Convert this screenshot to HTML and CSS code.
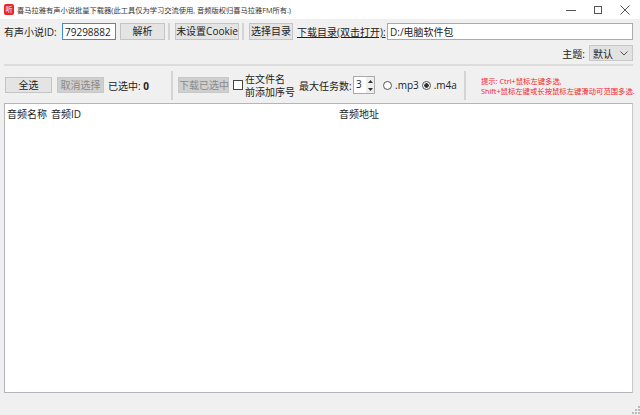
FILE: index.html
```html
<!DOCTYPE html>
<html lang="zh-CN">
<head>
  <meta charset="UTF-8">
  <meta name="viewport" content="width=device-width, initial-scale=1.0">
  <title>喜马拉雅有声小说批量下载器</title>
  <link rel="stylesheet" href="styles.css">
</head>
<body>
  <div class="window">
    <div class="titlebar">
      <span class="app-icon">听</span>
      <span class="title-text">喜马拉雅有声小说批量下载器(此工具仅为学习交流使用, 音频版权归喜马拉雅FM所有.)</span>
      <div class="window-btns">
        <svg width="10" height="10" viewBox="0 0 10 10"><path d="M0 5.5h10" stroke="#555" fill="none"/></svg>
        <svg width="10" height="10" viewBox="0 0 10 10"><rect x="1.5" y="1.5" width="7" height="7" stroke="#555" fill="none"/></svg>
        <svg width="10" height="10" viewBox="0 0 10 10"><path d="M0.5 0.5l9 9M9.5 0.5l-9 9" stroke="#555" fill="none"/></svg>
      </div>
    </div>

    <div class="row row-top">
      <label class="lbl lbl-id">有声小说ID:</label>
      <input class="id-input" type="text" value="79298882">
      <button class="btn btn-parse">解析</button>
      <span class="vline"></span>
      <button class="btn btn-cookie">未设置Cookie</button>
      <span class="vline"></span>
      <button class="btn btn-dir">选择目录</button>
      <a class="dir-link" href="#">下载目录(双击打开):</a>
      <input class="dir-input" type="text" value="D:/电脑软件包">
    </div>

    <div class="row row-theme">
      <label class="lbl">主题:</label>
      <div class="combo">
        <span>默认</span>
        <svg width="8" height="5" viewBox="0 0 8 5"><path d="M0.5 0.5l3.5 3.5 3.5-3.5" stroke="#555" fill="none"/></svg>
      </div>
    </div>

    <div class="hline"></div>

    <div class="row row-actions">
      <button class="btn btn-all">全选</button>
      <button class="btn btn-off btn-cancel">取消选择</button>
      <span class="lbl selected">已选中: <b>0</b></span>
      <span class="vline vline-tall"></span>
      <button class="btn btn-off btn-down">下载已选中</button>
      <span class="check"></span>
      <span class="lbl check-text">在文件名<br>前添加序号</span>
      <span class="lbl max-label">最大任务数:</span>
      <div class="spin">
        <span class="spin-val">3</span>
        <span class="spin-arrows">
          <svg width="5" height="3" viewBox="0 0 5 3"><path d="M2.5 0L5 3H0z" fill="#333"/></svg>
          <svg width="5" height="3" viewBox="0 0 5 3"><path d="M0 0h5L2.5 3z" fill="#333"/></svg>
        </span>
      </div>
      <span class="radio"></span>
      <span class="lbl">.mp3</span>
      <span class="radio radio-on"></span>
      <span class="lbl">.m4a</span>
      <span class="vline vline-tall vline-hint"></span>
      <p class="hint">提示: Ctrl+鼠标左键多选,<br>Shift+鼠标左键或长按鼠标左键滑动可范围多选.</p>
    </div>

    <div class="table">
      <div class="table-head">
        <span class="col-name">音频名称</span>
        <span class="col-id">音频ID</span>
        <span>音频地址</span>
      </div>
    </div>

    <div class="statusbar">
      <svg width="10" height="10" viewBox="0 0 10 10"><path d="M8 1h2v2H8zM5 4h2v2H5zM8 4h2v2H8zM2 7h2v2H2zM5 7h2v2H5zM8 7h2v2H8z" fill="#bbb"/></svg>
    </div>
  </div>
</body>
</html>
```

FILE: styles.css
```css
html, body {
  margin: 0;
  padding: 0;
  background-color: #f0f0f0;
}
.window {
  width: 640px;
  height: 415px;
  display: flex;
  flex-direction: column;
  overflow: hidden;
  font-family: "Open Sans", "Noto Sans CJK SC", sans-serif;
  font-size: 10px;
  color: #222;
}
.titlebar {
  height: 19px;
  background-color: #fff;
  display: flex;
  align-items: center;
  padding: 0 0 0 4px;
  flex-shrink: 0;
}
.app-icon {
  width: 10px;
  height: 11px;
  margin-right: 3px;
  background-color: #e8262a;
  border-radius: 2px;
  color: #fff;
  font-size: 7px;
  line-height: 11px;
  text-align: center;
}
.title-text {
  font-size: 7.25px;
  color: #333;
  white-space: nowrap;
}
.window-btns {
  margin-left: auto;
  display: flex;
  align-items: center;
  gap: 17px;
  padding-right: 10px;
}
.row {
  display: flex;
  align-items: center;
  flex-shrink: 0;
}
.row-top {
  height: 17px;
  margin-top: 4px;
  padding: 0 7px 0 4px;
}
.lbl {
  white-space: nowrap;
  flex-shrink: 0;
}
.lbl-id {
  width: 58px;
}
.id-input {
  width: 54px;
  height: 17px;
  box-sizing: border-box;
  padding: 0 2px;
  border: 1px solid #3a8ed8;
  font: inherit;
  color: #222;
  background-color: #fff;
  outline: none;
  flex-shrink: 0;
}
.btn {
  height: 16px;
  box-sizing: border-box;
  padding: 0;
  border: 1px solid #c4c4c4;
  background-color: #e4e4e4;
  font: inherit;
  color: #222;
  line-height: 13px;
  white-space: nowrap;
  flex-shrink: 0;
}
.row-top .btn {
  height: 17px;
}
.btn-parse {
  width: 45px;
  margin-left: 4px;
}
.vline {
  width: 2px;
  height: 17px;
  margin: 0 5px 0 3px;
  background-color: #d4d4d4;
  flex-shrink: 0;
}
.btn-cookie {
  width: 64px;
}
.btn-dir {
  width: 44px;
}
.dir-link {
  width: 86px;
  margin-left: 4px;
  color: #222;
  white-space: nowrap;
  flex-shrink: 0;
}
.dir-input {
  flex: 1;
  min-width: 0;
  height: 17px;
  box-sizing: border-box;
  margin-left: 4px;
  padding: 0 2px;
  border: 1px solid #aaa;
  font: inherit;
  color: #222;
  background-color: #fff;
}
.row-theme {
  height: 16px;
  margin-top: 5px;
  justify-content: flex-end;
  padding-right: 7px;
}
.combo {
  width: 44px;
  height: 16px;
  margin-left: 4px;
  padding: 0 4px 0 3px;
  box-sizing: border-box;
  display: flex;
  align-items: center;
  justify-content: space-between;
  background-color: #e2e2e2;
  border: 1px solid #c8c8c8;
}
.hline {
  height: 2px;
  margin: 3px 7px 0 4px;
  background-color: #dcdcdc;
  flex-shrink: 0;
}
.row-actions {
  height: 32px;
  margin: 3px 0 2px;
  padding-left: 5px;
}
.btn-all {
  width: 47px;
}
.btn-off {
  border-color: #c8c8c8;
  background-color: #cfcfcf;
  color: #8a8a8a;
}
.btn-cancel {
  width: 47px;
  margin-left: 5px;
}
.selected {
  width: 40px;
  margin-left: 4px;
}
.selected b {
  font-weight: 700;
}
.vline-tall {
  height: 29px;
  margin: 0 5px 0 23px;
}
.btn-down {
  width: 51px;
}
.check {
  width: 8px;
  height: 8px;
  margin-left: 4px;
  border: 1px solid #444;
  background-color: #fff;
  flex-shrink: 0;
}
.check-text {
  width: 50px;
  margin: 2px 0 0 2px;
  line-height: 13px;
}
.max-label {
  width: 52px;
  margin-left: 4px;
}
.spin {
  width: 22px;
  height: 18px;
  margin-left: 2px;
  box-sizing: border-box;
  display: flex;
  border: 1px solid #aaa;
  background-color: #fff;
  flex-shrink: 0;
}
.spin-val {
  flex: 1;
  padding-left: 2px;
  line-height: 15px;
}
.spin-arrows {
  width: 8px;
  display: flex;
  flex-direction: column;
  align-items: center;
  justify-content: space-around;
  background-color: #eee;
}
.spin-arrows svg {
  display: block;
}
.radio {
  width: 7px;
  height: 7px;
  margin: 0 3px 0 8px;
  border: 1px solid #555;
  border-radius: 50%;
  background-color: #fff;
  flex-shrink: 0;
}
.radio-on {
  margin-left: 3px;
  background: radial-gradient(circle, #333 0 2px, #fff 2.5px);
}
.vline-hint {
  margin: 0 15px 0 7px;
}
.hint {
  margin: 1px 0 0;
  font-size: 7.35px;
  line-height: 10px;
  color: #f5222d;
  white-space: nowrap;
}
.table {
  height: 290px;
  margin: 0 7px 0 4px;
  box-sizing: border-box;
  flex-shrink: 0;
  background-color: #fff;
  border: 1px solid #b4b4bc;
  border-right-color: #c8c8c8;
}
.table-head {
  height: 19px;
  display: flex;
  align-items: center;
  padding-left: 2px;
}
.col-name {
  width: 44px;
  flex-shrink: 0;
}
.col-id {
  width: 288px;
  flex-shrink: 0;
}
.statusbar {
  flex: 1;
  display: flex;
  justify-content: flex-end;
  align-items: flex-end;
}
```
